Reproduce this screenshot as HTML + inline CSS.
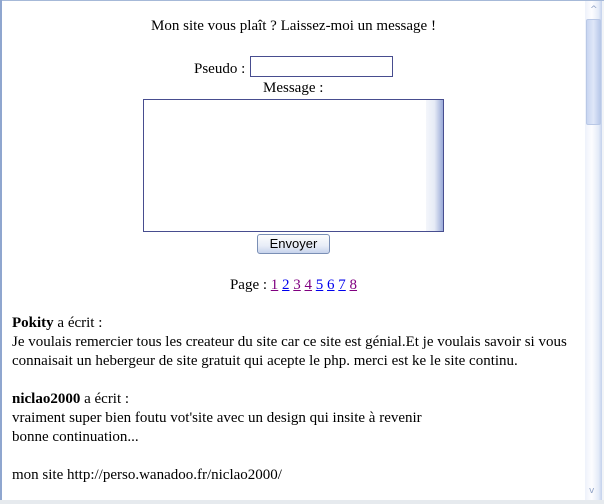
<!DOCTYPE html>
<html><head><meta charset="utf-8"><style>
*{margin:0;padding:0;box-sizing:border-box}
html,body{width:604px;height:504px;overflow:hidden;background:#fff}
body{font-family:"Liberation Serif",serif;font-size:15px;color:#000;position:relative}
.l{position:absolute;line-height:19px;white-space:nowrap}
.c{left:2px;width:583px;text-align:center}
a{text-decoration:underline}
.v{color:#800080}.b{color:#0000ee}
</style></head><body>
<div style="position:absolute;left:0;top:0;width:604px;height:1px;background:#a6b9d8"></div>
<div style="position:absolute;left:0;top:0;width:2px;height:504px;background:#8fa6cf"></div>
<div style="position:absolute;left:0;top:500px;width:604px;height:4px;background:#e6eaee"></div>
<div style="position:absolute;left:585px;top:1px;width:17px;height:499px;background:linear-gradient(90deg,#eef2fb,#fdfdff 40%,#e4ebf8 80%,#c3d1ec)"></div>
<div style="position:absolute;left:586px;top:19px;width:15px;height:106px;border:1px solid #b9c8e6;border-radius:2px;background:linear-gradient(90deg,#c9d6f1,#dfe7f8 50%,#b9c9ea)"></div>
<div style="position:absolute;left:590px;top:5px;font:9px 'DejaVu Sans';color:#8ea0c4">^</div>
<div style="position:absolute;left:589px;top:486px;font:9px 'DejaVu Sans';color:#8ea0c4">v</div>
<div style="position:absolute;left:602px;top:1px;width:2px;height:499px;background:#f2f4f7"></div>

<div class="l c" style="top:17px">Mon site vous plaît ? Laissez-moi un message !</div>
<div class="l" style="left:194px;top:60px">Pseudo :</div>
<div style="position:absolute;left:250px;top:56px;width:143px;height:21px;border:1px solid #474d8f;background:#fff"></div>
<div class="l" style="left:263px;top:79px">Message :</div>
<div style="position:absolute;left:143px;top:99px;width:301px;height:133px;border:1px solid #474d8f;background:#fff">
 <div style="position:absolute;right:0;top:0;width:17px;height:131px;background:linear-gradient(90deg,#f4f6fb,#e6ebf6 50%,#9aaad8)"></div>
</div>
<div style="position:absolute;left:257px;top:234px;width:73px;height:20px;border:1px solid #7a8fb5;border-radius:3px;background:linear-gradient(#fdfdfd,#e8edf7 60%,#c7d3ec);font-family:'Liberation Sans',sans-serif;font-size:13px;line-height:18px;text-align:center">Envoyer</div>
<div class="l c" style="top:276px">Page : <a class="v">1</a> <a class="b">2</a> <a class="v">3</a> <a class="v">4</a> <a class="b">5</a> <a class="b">6</a> <a class="b">7</a> <a class="v">8</a></div>

<div class="l" style="left:12px;top:314px"><b>Pokity</b> a écrit :</div>
<div class="l" style="left:12px;top:333px">Je voulais remercier tous les createur du site car ce site est génial.Et je voulais savoir si vous</div>
<div class="l" style="left:12px;top:352px">connaisait un hebergeur de site gratuit qui acepte le php. merci est ke le site continu.</div>
<div class="l" style="left:12px;top:390px"><b>niclao2000</b> a écrit :</div>
<div class="l" style="left:12px;top:409px">vraiment super bien foutu vot'site avec un design qui insite à revenir</div>
<div class="l" style="left:12px;top:428px">bonne continuation...</div>
<div class="l" style="left:12px;top:466px">mon site http://perso.wanadoo.fr/niclao2000/</div>
</body></html>
